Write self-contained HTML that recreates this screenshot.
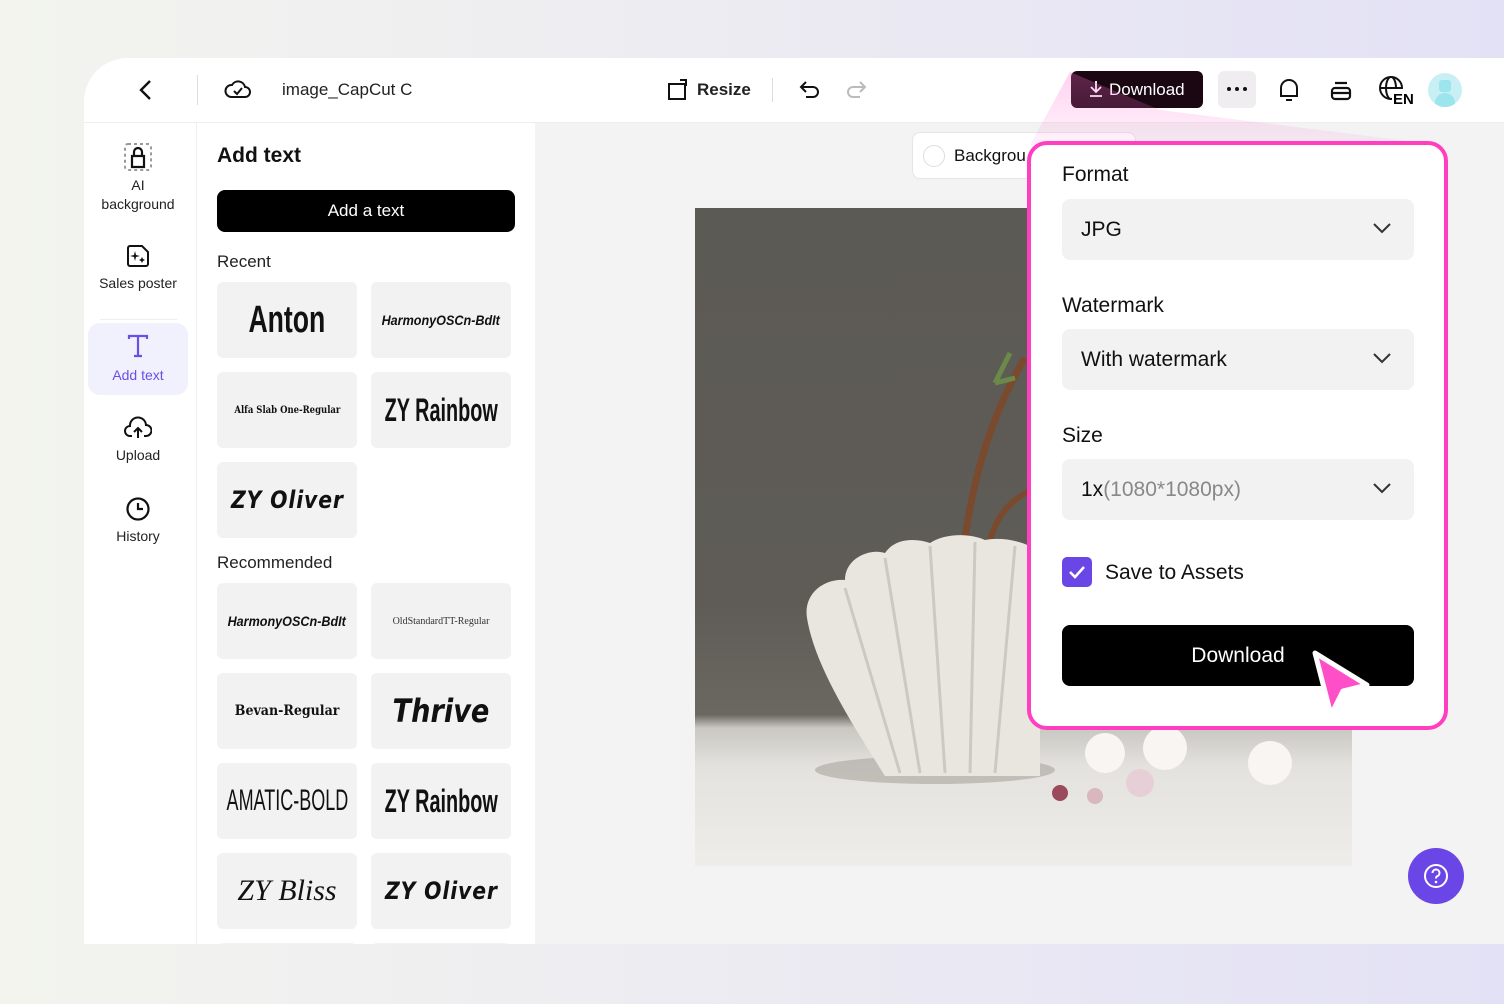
<!DOCTYPE html>
<html><head><style>
*{box-sizing:border-box;margin:0;padding:0}
body{width:1504px;height:1004px;overflow:hidden;font-family:"Liberation Sans",sans-serif;background:linear-gradient(90deg,#f3f4ee 0%,#ecebf2 50%,#e3e1f5 100%);position:relative;color:#111}
.card{position:absolute;left:84px;top:58px;width:1420px;height:886px;background:#fff;border-top-left-radius:44px;overflow:hidden}
.hdr{position:absolute;left:0;top:0;right:0;height:65px;border-bottom:1px solid #eee;background:#fff}
.rail{position:absolute;left:0;top:65px;width:113px;bottom:0;background:#fff;border-right:1px solid #eee}
.panel{position:absolute;left:114px;top:65px;width:336px;bottom:0;background:#fff}
.canvas{position:absolute;left:451px;top:65px;right:0;bottom:0;background:#f3f3f3}
.ri{position:absolute;left:4px;width:100px;text-align:center;font-size:14px;color:#222}
.tile{position:absolute;width:140px;height:76px;background:#f2f2f2;border-radius:6px;display:flex;align-items:center;justify-content:center;color:#111;overflow:hidden;white-space:nowrap}
.lbl{position:absolute;font-size:17px;color:#222}
.pop{position:absolute;left:1027px;top:141px;width:421px;height:589px;background:#fff;border:4px solid #ff3fc0;border-radius:20px}
.sel{position:absolute;left:31px;width:352px;height:61px;background:#f2f2f2;border-radius:8px;font-size:21px;padding-left:19px;line-height:61px;color:#111}
.sel svg{position:absolute;right:22px;top:22px}
.ph{position:absolute;font-size:21px;color:#111}
</style></head><body>
<div class="card">
 <div class="hdr">
  <svg style="position:absolute;left:52px;top:21px" width="20" height="22" viewBox="0 0 20 22"><path d="M14 2 L5 11 L14 20" stroke="#111" stroke-width="2.4" fill="none"/></svg>
  <div style="position:absolute;left:113px;top:17px;width:1px;height:30px;background:#ddd"></div>
  <svg style="position:absolute;left:140px;top:18px" width="28" height="26" viewBox="0 0 28 26"><path d="M7 21 H21 A5 5 0 0 0 21 11 A7 7 0 0 0 8 9 A6 6 0 0 0 7 21 Z" stroke="#111" stroke-width="2" fill="none"/><path d="M10 15 L13 18 L18 12" stroke="#111" stroke-width="2" fill="none"/></svg>
  <div style="position:absolute;left:198px;top:22px;font-size:17px;color:#222">image_CapCut C</div>
  <svg style="position:absolute;left:582px;top:20px" width="24" height="24" viewBox="0 0 24 24"><path d="M3 6 H19 V21 H3 Z" stroke="#111" stroke-width="2" fill="none"/><path d="M14 2 L20 2 L20 8" stroke="#111" stroke-width="2" fill="none"/></svg>
  <div style="position:absolute;left:613px;top:22px;font-size:17px;font-weight:bold;color:#222">Resize</div>
  <div style="position:absolute;left:688px;top:20px;width:1px;height:24px;background:#ddd"></div>
  <svg style="position:absolute;left:714px;top:20px" width="24" height="24" viewBox="0 0 24 24"><path d="M8 4 L3 9 L8 14 M3 9 H15 A5 5 0 0 1 15 19 H8" stroke="#111" stroke-width="2" fill="none"/></svg>
  <svg style="position:absolute;left:760px;top:20px" width="24" height="24" viewBox="0 0 24 24"><path d="M16 4 L21 9 L16 14 M21 9 H9 A5 5 0 0 0 9 19 H16" stroke="#bbb" stroke-width="2" fill="none"/></svg>
  <div style="position:absolute;left:987px;top:13px;width:132px;height:37px;background:#1a0712;border-radius:6px;color:#fff;font-size:17px;line-height:37px;padding-left:38px">Download</div>
  <svg style="position:absolute;left:1004px;top:22px" width="16" height="18" viewBox="0 0 16 18"><path d="M8 1 V12 M3 7 L8 12 L13 7 M2 16 H14" stroke="#fff" stroke-width="1.8" fill="none"/></svg>
  <div style="position:absolute;left:1134px;top:13px;width:38px;height:37px;background:#efedf0;border-radius:6px"><span style="position:absolute;left:9px;top:16px;width:4px;height:4px;border-radius:50%;background:#111"></span><span style="position:absolute;left:17px;top:16px;width:4px;height:4px;border-radius:50%;background:#111"></span><span style="position:absolute;left:25px;top:16px;width:4px;height:4px;border-radius:50%;background:#111"></span></div>
  <svg style="position:absolute;left:1192px;top:18px" width="26" height="28" viewBox="0 0 26 28"><path d="M5 20 V12 A8 8 0 0 1 21 12 V20 H4 H22" stroke="#111" stroke-width="2" fill="none"/><path d="M10 24 H16" stroke="#111" stroke-width="2"/></svg>
  <svg style="position:absolute;left:1245px;top:19px" width="24" height="26" viewBox="0 0 24 26"><rect x="3" y="11" width="18" height="11" rx="3" stroke="#111" stroke-width="2.2" fill="none"/><path d="M3 16 H21 M6 6 H18" stroke="#111" stroke-width="2.2"/></svg>
  <svg style="position:absolute;left:1294px;top:17px" width="36" height="30" viewBox="0 0 36 30"><circle cx="13" cy="13" r="11" stroke="#111" stroke-width="2" fill="none"/><ellipse cx="13" cy="13" rx="5" ry="11" stroke="#111" stroke-width="2" fill="none"/><path d="M2 13 H24" stroke="#111" stroke-width="2"/><rect x="14" y="14" width="22" height="16" fill="#fff"/><text x="15" y="29" font-size="15" font-weight="bold" font-family="Liberation Sans">EN</text></svg>
  <div style="position:absolute;left:1344px;top:15px;width:34px;height:34px;border-radius:50%;background:#c8f0f4;overflow:hidden"><div style="position:absolute;left:7px;top:20px;width:20px;height:16px;border-radius:10px 10px 0 0;background:#9ce5ec"></div><div style="position:absolute;left:11px;top:7px;width:12px;height:12px;border-radius:3px;background:#9ce5ec"></div></div>
 </div>
 <div class="rail">
  <svg style="position:absolute;left:40px;top:20px" width="28" height="28" viewBox="0 0 28 28"><rect x="1" y="1" width="26" height="26" rx="3" stroke="#999" stroke-width="2" stroke-dasharray="3 3" fill="none"/><path d="M8 24 V13 H20 V24 Z M10 13 V9 A4 4 0 0 1 18 9 V13" stroke="#111" stroke-width="2.2" fill="none"/></svg>
  <div class="ri" style="top:53px;line-height:19px">AI<br>background</div>
  <svg style="position:absolute;left:42px;top:121px" width="24" height="24" viewBox="0 0 24 24"><path d="M2 4 A2 2 0 0 1 4 2 H16 L22 8 V20 A2 2 0 0 1 20 22 H4 A2 2 0 0 1 2 20 Z" stroke="#111" stroke-width="2" fill="none"/><path d="M9 7 L10 11 L14 12 L10 13 L9 17 L8 13 L4 12 L8 11 Z M16 13 l1 2 2 1-2 1-1 2-1-2-2-1 2-1z" fill="#111"/></svg>
  <div class="ri" style="top:152px">Sales poster</div>
  <div style="position:absolute;left:16px;top:196px;width:77px;height:1px;background:#eee"></div>
  <div style="position:absolute;left:4px;top:200px;width:100px;height:72px;background:#f1f0fd;border-radius:12px"></div>
  <svg style="position:absolute;left:42px;top:211px" width="24" height="24" viewBox="0 0 24 24"><path d="M3 5 V2 H21 V5 M12 2 V22 M8 22 H16" stroke="#6b4ee6" stroke-width="2.2" fill="none"/></svg>
  <div class="ri" style="top:244px;color:#6b4ee6">Add text</div>
  <svg style="position:absolute;left:40px;top:293px" width="28" height="24" viewBox="0 0 28 24"><path d="M8 20 H6 A5 5 0 0 1 6 10 A8 8 0 0 1 22 9 A5 5 0 0 1 22 20 H20 M14 22 V12 M10 16 L14 12 L18 16" stroke="#111" stroke-width="2" fill="none"/></svg>
  <div class="ri" style="top:324px">Upload</div>
  <svg style="position:absolute;left:41px;top:373px" width="26" height="26" viewBox="0 0 26 26"><circle cx="13" cy="13" r="10.5" stroke="#111" stroke-width="2.2" fill="none"/><path d="M13 7 V13 H18" stroke="#111" stroke-width="2.2" fill="none"/></svg>
  <div class="ri" style="top:405px">History</div>
 </div>
 <div class="panel">
  <div style="position:absolute;left:19px;top:21px;font-size:21px;font-weight:bold">Add text</div>
  <div style="position:absolute;left:19px;top:67px;width:298px;height:42px;background:#000;border-radius:8px;color:#fff;text-align:center;line-height:42px;font-size:17px">Add a text</div>
  <div class="lbl" style="left:19px;top:129px">Recent</div>
  <div class="tile" style="left:19px;top:159px;font-weight:bold;font-size:38px"><span style="display:inline-block;transform:scaleX(.7)">Anton</span></div>
  <div class="tile" style="left:173px;top:159px;font-size:14px;font-style:italic;font-weight:bold"><span style="display:inline-block;transform:scaleX(.9)">HarmonyOSCn-BdIt</span></div>
  <div class="tile" style="left:19px;top:249px;font-family:'DejaVu Serif';font-weight:bold;font-size:10px"><span style="display:inline-block;transform:scaleX(.85)">Alfa Slab One-Regular</span></div>
  <div class="tile" style="left:173px;top:249px;font-weight:bold;font-size:32px"><span style="display:inline-block;transform:scaleX(.62)">ZY Rainbow</span></div>
  <div class="tile" style="left:19px;top:339px;font-weight:bold;font-style:italic;font-size:24px;letter-spacing:1px;font-family:'DejaVu Sans'"><span style="display:inline-block;transform:scaleX(.85)">ZY Oliver</span></div>
  <div class="lbl" style="left:19px;top:430px">Recommended</div>
  <div class="tile" style="left:19px;top:460px;font-size:14px;font-style:italic;font-weight:bold"><span style="display:inline-block;transform:scaleX(.9)">HarmonyOSCn-BdIt</span></div>
  <div class="tile" style="left:173px;top:460px;font-family:'Liberation Serif';font-size:10px;color:#333">OldStandardTT-Regular</div>
  <div class="tile" style="left:19px;top:550px;font-family:'DejaVu Serif';font-weight:bold;font-size:14px"><span style="display:inline-block;transform:scaleX(.9)">Bevan-Regular</span></div>
  <div class="tile" style="left:173px;top:550px;font-style:italic;font-weight:bold;font-size:32px;font-family:'DejaVu Sans'"><span style="display:inline-block;transform:scaleX(.85)">Thrive</span></div>
  <div class="tile" style="left:19px;top:640px;font-size:30px"><span style="display:inline-block;transform:scaleX(.6)">AMATIC-BOLD</span></div>
  <div class="tile" style="left:173px;top:640px;font-weight:bold;font-size:32px"><span style="display:inline-block;transform:scaleX(.62)">ZY Rainbow</span></div>
  <div class="tile" style="left:19px;top:730px;font-family:'Liberation Serif';font-style:italic;font-size:30px">ZY Bliss</div>
  <div class="tile" style="left:173px;top:730px;font-weight:bold;font-style:italic;font-size:24px;letter-spacing:1px;font-family:'DejaVu Sans'"><span style="display:inline-block;transform:scaleX(.85)">ZY Oliver</span></div>
  <div class="tile" style="left:19px;top:820px"></div><div class="tile" style="left:173px;top:820px"></div>
 </div>
 <div class="canvas">
  <div style="position:absolute;left:377px;top:9px;width:224px;height:47px;background:#fff;border:1px solid #e5e5e5;border-radius:8px"><div style="position:absolute;left:10px;top:12px;width:22px;height:22px;border-radius:50%;border:1px solid #ddd"></div><div style="position:absolute;left:41px;top:13px;font-size:17px">Backgrou</div></div>
  <div style="position:absolute;left:160px;top:85px;width:657px;height:658px;background:linear-gradient(180deg,#5c5a55 0%,#5f5c57 60%,#6b6862 77%,#c9c7c2 79%,#e4e2de 85%,#eeede9 100%);overflow:hidden">
   <svg style="position:absolute;left:0;top:0" width="657" height="658" viewBox="0 0 657 658">
    <path d="M270 330 C280 260 300 200 330 150" stroke="#7a4a2e" stroke-width="7" fill="none"/>
    <path d="M295 332 C305 300 320 290 340 280" stroke="#7a4a2e" stroke-width="6" fill="none"/>
    <path d="M315 145 l-15 30 M320 170 l-20 5" stroke="#6b8a4a" stroke-width="5"/>
    <ellipse cx="240" cy="562" rx="120" ry="14" fill="#a8a59f" opacity=".6"/>
    <path d="M190 568 C160 520 120 460 112 410 C108 385 130 370 150 372 C150 350 175 340 190 345 C200 330 220 330 235 335 C250 325 275 325 290 332 C310 328 335 335 345 345 L345 568 Z" fill="#e9e6e0"/>
    <g stroke="#cdc9c2" stroke-width="3" fill="none"><path d="M150 380 L205 565"/><path d="M190 350 L225 565"/><path d="M235 338 L250 565"/><path d="M280 334 L275 565"/><path d="M320 338 L300 565"/></g>
    <g fill="#f8f5f3"><circle cx="410" cy="545" r="20"/><circle cx="470" cy="540" r="22"/><circle cx="575" cy="555" r="22"/><circle cx="445" cy="575" r="14" fill="#e6cfd6"/></g>
    <circle cx="365" cy="585" r="8" fill="#9a4a5a"/><circle cx="400" cy="588" r="8" fill="#d8b7bf"/>
   </svg>
  </div>
  <div style="position:absolute;right:40px;bottom:40px;width:56px;height:56px;border-radius:50%;background:#6b46e6"><svg style="position:absolute;left:15px;top:15px" width="26" height="26" viewBox="0 0 26 26"><circle cx="13" cy="13" r="11" stroke="#fff" stroke-width="2" fill="none"/><path d="M9.5 10 A3.5 3.5 0 1 1 14 13.3 Q13 14 13 15.5" stroke="#fff" stroke-width="2" fill="none"/><circle cx="13" cy="19" r="1.3" fill="#fff"/></svg></div>
 </div>
</div>
<svg style="position:absolute;left:0;top:0" width="1504" height="1004"><defs><linearGradient id="g" x1="0" y1="0" x2="0" y2="1"><stop offset="0" stop-color="#ff6ad0" stop-opacity=".3"/><stop offset="1" stop-color="#ff6ad0" stop-opacity=".08"/></linearGradient></defs><path d="M1070 72 L1030 145 L1440 145 L1160 110 Z" fill="url(#g)"/></svg>
<div class="pop">
 <div class="ph" style="left:31px;top:18px">Format</div>
 <div class="sel" style="top:54px">JPG<svg width="20" height="14" viewBox="0 0 20 14"><path d="M2 3 L10 11 L18 3" stroke="#333" stroke-width="2" fill="none"/></svg></div>
 <div class="ph" style="left:31px;top:149px">Watermark</div>
 <div class="sel" style="top:184px">With watermark<svg width="20" height="14" viewBox="0 0 20 14"><path d="M2 3 L10 11 L18 3" stroke="#333" stroke-width="2" fill="none"/></svg></div>
 <div class="ph" style="left:31px;top:279px">Size</div>
 <div class="sel" style="top:314px">1x<span style="color:#888">(1080*1080px)</span><svg width="20" height="14" viewBox="0 0 20 14"><path d="M2 3 L10 11 L18 3" stroke="#333" stroke-width="2" fill="none"/></svg></div>
 <div style="position:absolute;left:31px;top:412px;width:30px;height:30px;border-radius:5px;background:#6b46e6"><svg width="30" height="30" viewBox="0 0 30 30"><path d="M8 15 L13 20 L22 10" stroke="#fff" stroke-width="2.5" fill="none"/></svg></div>
 <div class="ph" style="left:74px;top:416px">Save to Assets</div>
 <div style="position:absolute;left:31px;top:480px;width:352px;height:61px;background:#000;border-radius:8px;color:#fff;text-align:center;line-height:61px;font-size:21px">Download</div>
</div>
<svg style="position:absolute;left:1305px;top:645px" width="70" height="80" viewBox="0 0 70 80"><path d="M10 8 L62 40 L38 46 L26 70 Z" fill="#ff4fc8" stroke="#fff" stroke-width="5" stroke-linejoin="round"/></svg>
</body></html>
